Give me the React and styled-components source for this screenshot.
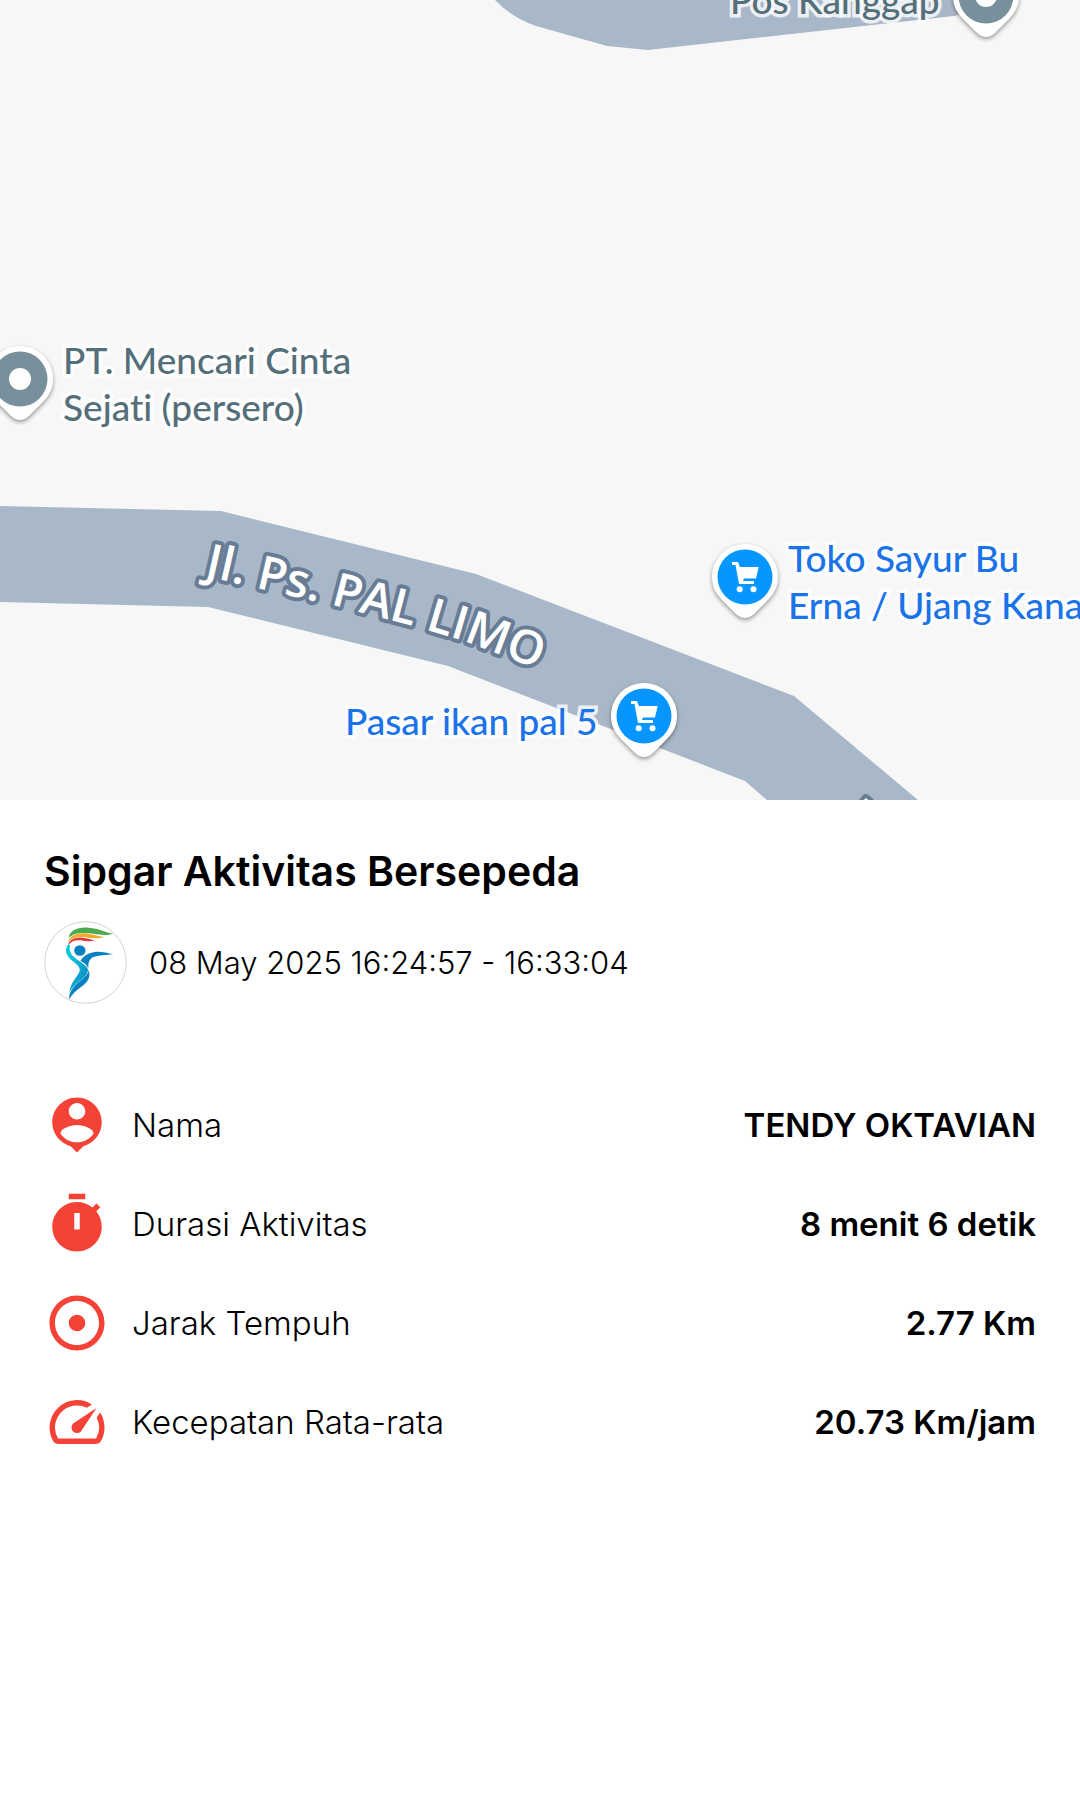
import React from "react";
import styled, { createGlobalStyle } from "styled-components";

const GlobalStyle = createGlobalStyle`
  *, *::before, *::after { box-sizing: border-box; }
  body { margin: 0; background: #ffffff; color: #000000; font-family: Inter, "Open Sans", sans-serif; }
`;

const Screen = styled.main`
  min-height: 100vh;
  background: #ffffff;
`;

const MapView = styled.section`
  position: relative;
  height: 800px;
  overflow: hidden;
  background: #f7f7f7;
`;

const Roads = styled.svg`
  position: absolute;
  left: 0;
  top: 0;
  display: block;
`;

const RoadName = styled.text`
  font-family: "Open Sans", "Noto Sans", sans-serif;
  font-size: 47px;
  font-weight: 600;
  fill: #ffffff;
  stroke: #687c95;
  stroke-width: 8px;
  stroke-linejoin: round;
  paint-order: stroke;
`;

const Place = styled.div`
  position: absolute;
  left: ${(p) => p.$x}px;
  top: ${(p) => p.$y}px;
`;

const PlaceName = styled.span`
  display: block;
  font-family: Lato, "Open Sans", sans-serif;
  font-size: 37px;
  font-weight: 500;
  font-variant-ligatures: none;
  line-height: 47px;
  white-space: pre;
  color: ${(p) => (p.$shop ? "#1a73e8" : "#546e7a")};
  -webkit-text-stroke: 7px rgba(255, 255, 255, 0.8);
  paint-order: stroke fill;
`;

const PinSvg = styled.svg`
  display: block;
  filter: drop-shadow(0 2px 2px rgba(0, 0, 0, 0.4));
`;

const Sheet = styled.section`
  padding: 44px;
`;

const Title = styled.h1`
  margin: 0 0 22px;
  font-size: 41px;
  line-height: 55px;
  font-weight: 600;
`;

const Session = styled.div`
  display: flex;
  align-items: center;
  gap: 22px;
  margin-bottom: 88px;
  font-size: 31px;
  line-height: 44px;
  font-weight: 300;
`;

const Avatar = styled.svg`
  flex: none;
  width: 83px;
  height: 83px;
`;

const Stats = styled.dl`
  display: flex;
  flex-direction: column;
  gap: 33px;
  margin: 0;
`;

const Stat = styled.div`
  display: flex;
  align-items: center;
  height: 66px;
  font-size: 33px;
  line-height: 44px;
`;

const StatLabel = styled.dt`
  display: flex;
  align-items: center;
  gap: 22px;
  font-weight: 300;
`;

const StatValue = styled.dd`
  margin: 0 0 0 auto;
  font-weight: 600;
`;

const StatIcon = styled.svg`
  width: 66px;
  height: 66px;
  fill: #f44336;
  fill-rule: evenodd;
`;

function Pin({ shop }) {
  return (
    <PinSvg width="74" height="84" viewBox="-37 -37 74 84" aria-hidden="true">
      <path
        d="M0 -33C18.500 -33 33 -18.500 33 0C33 10 29 17 22 24L9 37Q0 45 -9 37L-22 24C-29 17 -33 10 -33 0C-33 -18.500 -18.500 -33 0 -33Z"
        fill="#fff"
      />
      <circle r="27.500" fill={shop ? "#0796ff" : "#78909c"} />
      {shop ? (
        <g fill="#fff">
          <path d="M-13 -15h6l1.800 5H13.700L11 1.500H-1L-2 4H9V7H-6L-9.500 -12H-13Z" />
          <circle cx="-5.300" cy="12.300" r="3" />
          <circle cx="8.500" cy="12.300" r="3" />
        </g>
      ) : (
        <circle r="11" fill="#fff" />
      )}
    </PinSvg>
  );
}

function Logo() {
  return (
    <Avatar viewBox="41 32 249 249" role="img" aria-label="Sipgar">
      <defs>
        <linearGradient id="torso" x1="0" y1="0" x2="1" y2="1">
          <stop offset="0" stopColor="#00cfe0" />
          <stop offset="0.400" stopColor="#12b8d6" />
          <stop offset="1" stopColor="#0878b8" />
        </linearGradient>
      </defs>
      <circle cx="165.500" cy="156.500" r="122.500" fill="#fff" stroke="#bcbcbc" strokeWidth="2" />
      <path fill="#4caa4e" d="M115 83C117 62 140 49 175 52C205 54 225 66 249 71C226 76 210 73 190 70C160 66 130 66 115 83Z" />
      <path fill="#f0ad2d" d="M114 95C116 77 140 67 164 69C185 71 202 78 222 80C202 86 184 84 165 81C143 78 124 82 114 95Z" />
      <path fill="#e03a32" d="M114 105C114 89 135 80 155 82C172 83 182 88 194 90C176 95 165 93 152 90C135 88 121 93 114 105Z" />
      <ellipse cx="148.500" cy="120.500" rx="17" ry="15.500" fill="#0781c0" />
      <path fill="#0781c0" d="M150 152C160 134 182 123 206 124C222 125 238 129 249 132C226 135 207 135 192 139C179 143 173 154 174 173C168 163 161 157 150 152Z" />
      <path fill="url(#torso)" d="M113 103C103 117 106 130 119 145C134 159 151 167 148 182C145 196 120 214 117 249C130 218 172 208 174 177C165 158 131 146 122 129C117 119 117 111 119 104Z" />
      <path fill="#0781c0" d="M175 179C182 202 172 216 151 231C136 242 125 251 117 267C115 253 121 239 135 224C150 209 171 199 175 179Z" />
      <path d="M122 130C135 148 163 156 174 177C173 205 132 212 118 249" fill="none" stroke="#fff" strokeWidth="2" strokeDasharray="4 2" />
    </Avatar>
  );
}

const stats = [
  {
    label: "Nama",
    value: "TENDY OKTAVIAN",
    icon: "M12 2c-4.970 0-9 4.030-9 9 0 4.170 2.840 7.670 6.690 8.690L12 22l2.310-2.310C18.160 18.670 21 15.170 21 11c0-4.970-4.030-9-9-9zm0 2c1.660 0 3 1.340 3 3s-1.340 3-3 3-3-1.340-3-3 1.340-3 3-3zm0 14.300c-2.500 0-4.710-1.280-6-3.220.030-1.990 4-3.080 6-3.080 1.990 0 5.970 1.090 6 3.080-1.290 1.940-3.500 3.220-6 3.220z",
  },
  {
    label: "Durasi Aktivitas",
    value: "8 menit 6 detik",
    icon: "M15 1H9v2h6V1zm-4 13h2V8h-2v6zm8.030-6.610 1.420-1.420c-.430-.510-.900-.990-1.410-1.410l-1.420 1.420C16.070 4.740 14.120 4 12 4c-4.970 0-9 4.030-9 9s4.020 9 9 9 9-4.030 9-9c0-2.120-.740-4.070-1.970-5.610z",
  },
  {
    label: "Jarak Tempuh",
    value: "2.77 Km",
    icon: "M12 2C6.490 2 2 6.490 2 12s4.490 10 10 10 10-4.490 10-10S17.510 2 12 2zm0 18c-4.410 0-8-3.590-8-8s3.590-8 8-8 8 3.590 8 8-3.590 8-8 8zm3-8c0 1.660-1.340 3-3 3s-3-1.340-3-3 1.340-3 3-3 3 1.340 3 3z",
  },
  {
    label: "Kecepatan Rata-rata",
    value: "20.73 Km/jam",
    icon: "M20.380 8.570l-1.230 1.850a8 8 0 0 1-.220 7.580H5.070A8 8 0 0 1 15.580 6.850l1.850-1.230A10 10 0 0 0 3.350 19a2 2 0 0 0 1.720 1h13.850a2 2 0 0 0 1.740-1 10 10 0 0 0-.270-10.440zM10.590 15.410a2 2 0 0 0 2.830 0l5.660-8.490-8.490 5.660a2 2 0 0 0 0 2.830z",
  },
];

export default function App() {
  return (
    <Screen>
      <GlobalStyle />
      <MapView aria-label="Peta">
        <Roads width="1080" height="800" viewBox="0 0 1080 800">
          <g fill="#a9b8c9">
            <path d="M495 0Q511 17 536 26L607 46L648 50L954 16L990 6V0Z" />
            <path d="M0 506L221 511L476 574L794 696L918 800H767L745 781L448 666L208 607L0 602Z" />
          </g>
          <path id="road-line" d="M204 576L266 590L344 608L417 627L464 641L580 685" fill="none" />
          <path id="road-line-east" d="M841 821L900 870" fill="none" />
          <RoadName>
            <textPath href="#road-line">Jl. Ps. PAL LIMO</textPath>
          </RoadName>
          <RoadName>
            <textPath href="#road-line-east">J</textPath>
          </RoadName>
        </Roads>

        <Place $x={730} $y={-24}><PlaceName>Pos Kanggap</PlaceName></Place>
        <Place $x={949} $y={-41}><Pin /></Place>

        <Place $x={-17} $y={342}><Pin /></Place>
        <Place $x={63} $y={336}><PlaceName>{"PT. Mencari Cinta\nSejati (persero)"}</PlaceName></Place>

        <Place $x={708} $y={540}><Pin shop /></Place>
        <Place $x={788} $y={534}><PlaceName $shop>{"Toko Sayur Bu\nErna / Ujang Kana"}</PlaceName></Place>

        <Place $x={345} $y={697}><PlaceName $shop>Pasar ikan pal 5</PlaceName></Place>
        <Place $x={607} $y={679}><Pin shop /></Place>
      </MapView>

      <Sheet>
        <Title>Sipgar Aktivitas Bersepeda</Title>
        <Session>
          <Logo />
          <time dateTime="2025-05-08T16:24:57">08 May 2025 16:24:57 - 16:33:04</time>
        </Session>
        <Stats>
          {stats.map((s) => (
            <Stat key={s.label}>
              <StatLabel>
                <StatIcon viewBox="0 0 24 24" aria-hidden="true"><path d={s.icon} /></StatIcon>
                {s.label}
              </StatLabel>
              <StatValue>{s.value}</StatValue>
            </Stat>
          ))}
        </Stats>
      </Sheet>
    </Screen>
  );
}
